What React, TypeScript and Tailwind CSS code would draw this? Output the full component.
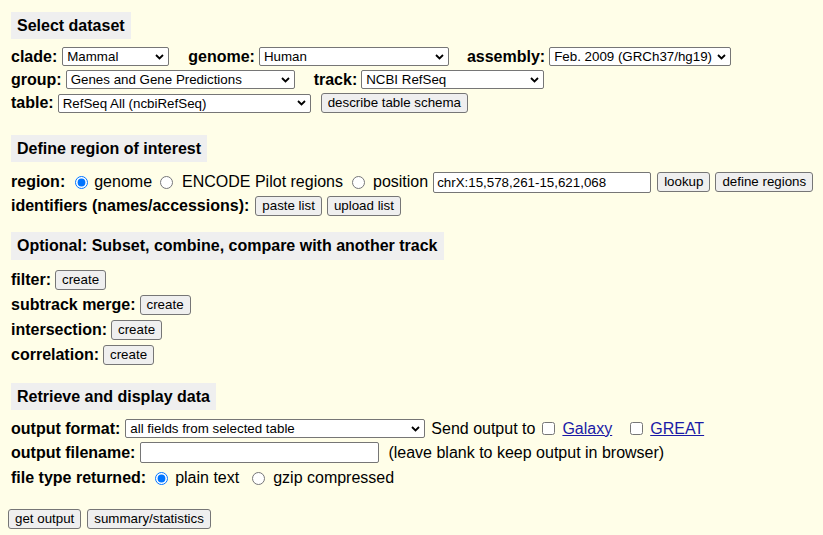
import type { ReactNode } from "react";

function Chevron() {
  return (
    <svg
      width="9"
      height="6"
      viewBox="0 0 9 6"
      className="pointer-events-none absolute right-[5px] top-1/2 -translate-y-1/2"
    >
      <polyline points="1,1 4.5,4.5 8,1" fill="none" stroke="#000" strokeWidth="1.8" />
    </svg>
  );
}

function Select({ width, value, className = "" }: { width: number; value: string; className?: string }) {
  return (
    <span className={`relative inline-block shrink-0 ${className}`} style={{ width }}>
      <select
        defaultValue={value}
        className="block h-[19px] w-full appearance-none rounded-[2px] border border-[#767676] bg-white pl-[4px] pr-[16px] text-[13.33px] leading-[17px] text-black outline-none"
      >
        <option>{value}</option>
      </select>
      <Chevron />
    </span>
  );
}

function Btn({ children, className = "" }: { children: ReactNode; className?: string }) {
  return (
    <button
      type="button"
      className={`inline-flex h-[20px] shrink-0 items-center rounded-[3px] border border-[#767676] bg-[#efefef] px-[6px] text-[13.33px] leading-none text-black ${className}`}
    >
      {children}
    </button>
  );
}

function Label({ children, className = "" }: { children: ReactNode; className?: string }) {
  return <span className={`shrink-0 whitespace-nowrap font-bold ${className}`}>{children}</span>;
}

function Header({ children, className = "" }: { children: ReactNode; className?: string }) {
  return (
    <div className={`ml-[3px] inline-block bg-[#efefef] px-[6px] text-[16px] font-bold ${className}`}>
      {children}
    </div>
  );
}

function Radio({ checked = false, name, className = "" }: { checked?: boolean; name: string; className?: string }) {
  return (
    <input
      type="radio"
      name={name}
      defaultChecked={checked}
      className={`m-0 h-[13px] w-[13px] shrink-0 accent-[#0075ff] ${className}`}
    />
  );
}

function Check({ className = "" }: { className?: string }) {
  return <input type="checkbox" className={`m-0 h-[13px] w-[13px] shrink-0 ${className}`} />;
}

export default function App() {
  return (
    <div className="min-h-screen bg-[#fffee8] pl-[8px] pt-[12px] font-['Liberation_Sans',Arial,sans-serif] text-[16px] text-black">
      <Header className="h-[27px] leading-[27px]">Select dataset</Header>

      <div className="ml-[3px] mt-[6px] flex h-[23px] items-center whitespace-nowrap">
        <Label>clade:</Label>
        <Select width={107} value="Mammal" className="ml-[5px]" />
        <Label className="ml-[19px]">genome:</Label>
        <Select width={190} value="Human" className="ml-[4px]" />
        <Label className="ml-[18px]">assembly:</Label>
        <Select width={182} value="Feb. 2009 (GRCh37/hg19)" className="ml-[4px]" />
      </div>
      <div className="ml-[3px] flex h-[23px] items-center whitespace-nowrap">
        <Label>group:</Label>
        <Select width={229} value="Genes and Gene Predictions" className="ml-[4px]" />
        <Label className="ml-[19px]">track:</Label>
        <Select width={183} value="NCBI RefSeq" className="ml-[4px]" />
      </div>
      <div className="ml-[3px] flex h-[24px] items-center whitespace-nowrap">
        <Label>table:</Label>
        <Select width={253} value="RefSeq All (ncbiRefSeq)" className="ml-[4px]" />
        <Btn className="ml-[10px]">describe table schema</Btn>
      </div>

      <Header className="mt-[20px] h-[27px] leading-[27px]">Define region of interest</Header>

      <div className="ml-[3px] mt-[8px] flex h-[24px] items-center whitespace-nowrap">
        <Label>region:</Label>
        <Radio name="region" checked className="ml-[10px]" />
        <span className="ml-[6px]">genome</span>
        <Radio name="region" className="ml-[8px]" />
        <span className="ml-[9px]">ENCODE Pilot regions</span>
        <Radio name="region" className="ml-[9px]" />
        <span className="ml-[8px]">position</span>
        <input
          type="text"
          defaultValue="chrX:15,578,261-15,621,068"
          className="ml-[5px] h-[21px] w-[218px] rounded-[2px] border border-[#767676] bg-white px-[3px] text-[13.33px] text-black outline-none"
        />
        <Btn className="ml-[6px]">lookup</Btn>
        <Btn className="ml-[5px]">define regions</Btn>
      </div>
      <div className="ml-[3px] flex h-[24px] items-center whitespace-nowrap">
        <Label>identifiers (names/accessions):</Label>
        <Btn className="ml-[6px]">paste list</Btn>
        <Btn className="ml-[5px]">upload list</Btn>
      </div>

      <Header className="mt-[14px] h-[28px] leading-[28px]">Optional: Subset, combine, compare with another track</Header>

      <div className="mt-[7px]">
        {["filter:", "subtrack merge:", "intersection:", "correlation:"].map((label) => (
          <div key={label} className="ml-[3px] flex h-[25px] items-center whitespace-nowrap">
            <Label>{label}</Label>
            <Btn className="ml-[4px]">create</Btn>
          </div>
        ))}
      </div>

      <Header className="mt-[16px] h-[27px] leading-[27px]">Retrieve and display data</Header>

      <div className="ml-[3px] mt-[7px] flex h-[23px] items-center whitespace-nowrap">
        <Label>output format:</Label>
        <Select width={300} value="all fields from selected table" className="ml-[5px]" />
        <span className="ml-[6px]">Send output to</span>
        <Check className="ml-[7px]" />
        <a href="#" className="ml-[7px] text-[#1a1aa6] underline">
          Galaxy
        </a>
        <Check className="ml-[18px]" />
        <a href="#" className="ml-[7px] text-[#1a1aa6] underline">
          GREAT
        </a>
      </div>
      <div className="ml-[3px] flex h-[25px] items-center whitespace-nowrap">
        <Label>output filename:</Label>
        <input
          type="text"
          className="ml-[5px] h-[21px] w-[239px] rounded-[2px] border border-[#767676] bg-white px-[3px] text-[13.33px] outline-none"
        />
        <span className="ml-[9px]">(leave blank to keep output in browser)</span>
      </div>
      <div className="ml-[3px] flex h-[26px] items-center whitespace-nowrap">
        <Label>file type returned:</Label>
        <Radio name="ftype" checked className="ml-[9px]" />
        <span className="ml-[7px]">plain text</span>
        <Radio name="ftype" className="ml-[13px]" />
        <span className="ml-[8px]">gzip compressed</span>
      </div>

      <div className="mt-[18px] flex items-center gap-[6px]">
        <Btn>get output</Btn>
        <Btn>summary/statistics</Btn>
      </div>
    </div>
  );
}
